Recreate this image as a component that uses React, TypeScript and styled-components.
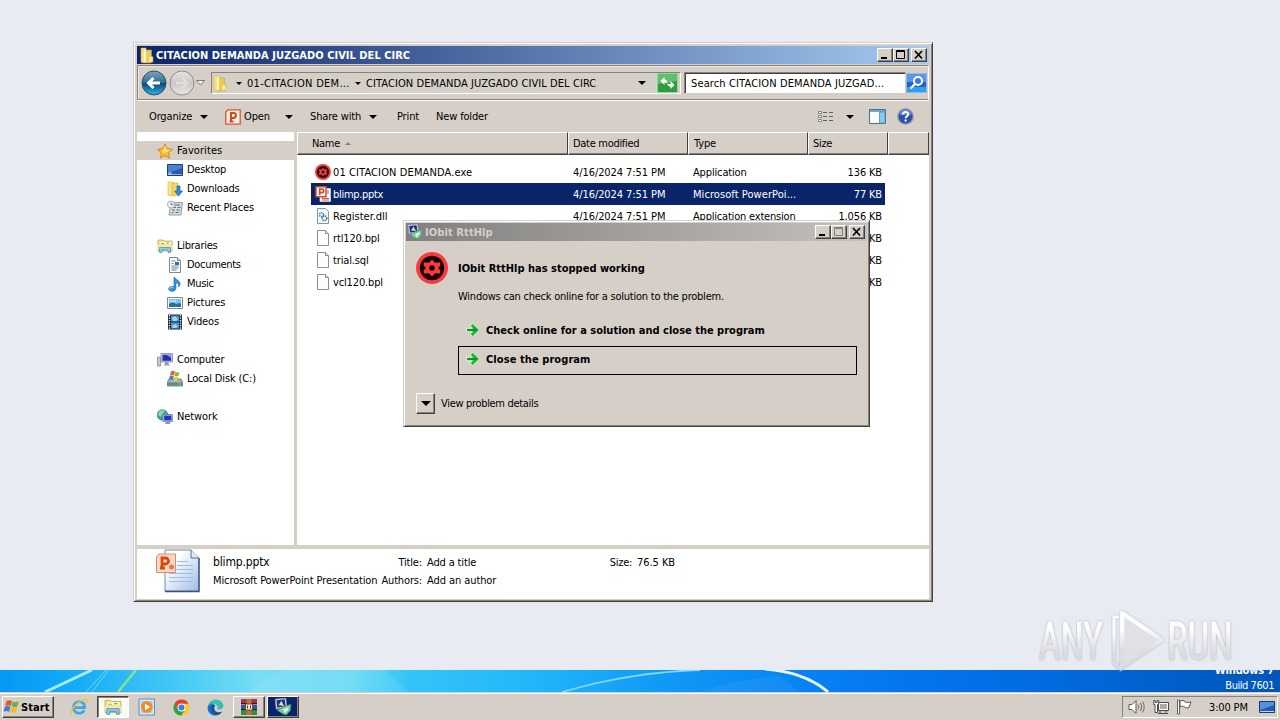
import React from "react";
import styled, {createGlobalStyle, css} from "styled-components";

const colors = {
    face: '#d5cfc8',
    light: '#ffffff',
    shadow: '#868179',
    dark: '#45423e',
    navy: '#0a246a',
    desktop: '#e8ebf2',
}

const GlobalStyle = createGlobalStyle`
  * {
    box-sizing: border-box;
  }

  body {
    margin: 0;
    overflow: hidden;
    background: ${colors.desktop};
    color: #000;
    font-family: "DejaVu Sans Condensed", "DejaVu Sans", sans-serif;
    font-stretch: condensed;
    font-size: 11px;
  }

  svg {
    display: block;
    flex: none;
  }
`

const raised = css`
  border: 1px solid;
  border-color: ${colors.light} ${colors.dark} ${colors.dark} ${colors.light};
  box-shadow: inset -1px -1px 0 ${colors.shadow};
`

const Screen = styled.div`
  position: relative;
  width: 1280px;
  height: 720px;
  overflow: hidden;
  display: flex;
  flex-direction: column;
  justify-content: flex-end;
`

const Text = styled.span<{$track?: number, $bold?: boolean, $size?: number}>`
  white-space: nowrap;
  letter-spacing: ${({$track = -0.15}) => $track}px;
  font-weight: ${({$bold}) => $bold ? 700 : 400};
  font-size: ${({$size = 11}) => $size}px;
`

const Frame = styled.section<{$x: number, $y: number, $w: number, $h: number, $pad?: number}>`
  position: absolute;
  left: ${({$x}) => $x}px;
  top: ${({$y}) => $y}px;
  width: ${({$w}) => $w}px;
  height: ${({$h}) => $h}px;
  display: flex;
  flex-direction: column;
  padding: ${({$pad = 2}) => $pad}px;
  background: ${colors.face};
  border: 1px solid;
  border-color: ${colors.face} ${colors.dark} ${colors.dark} ${colors.face};
  box-shadow: inset 1px 1px 0 ${colors.light}, inset -1px -1px 0 ${colors.shadow};
`

const TitleBar = styled.header<{$inactive?: boolean}>`
  display: flex;
  align-items: center;
  flex: none;
  height: 18px;
  padding: 0 2px 0 ${({$inactive}) => $inactive ? 1 : 2}px;
  gap: ${({$inactive}) => $inactive ? 2 : 1}px;
  color: ${({$inactive}) => $inactive ? '#d5cfc8' : '#fff'};
  background: ${({$inactive}) => $inactive
      ? 'linear-gradient(90deg, #808080, #c4c1be)'
      : 'linear-gradient(90deg, #0a246a, #a6caf0)'};
`

const Caption = styled.div`
  display: flex;
  margin-left: auto;
`

const CaptionButton = styled.span<{$gap?: boolean}>`
  ${raised};
  display: flex;
  width: 16px;
  height: 14px;
  margin-left: ${({$gap}) => $gap ? 2 : 0}px;
  background: ${colors.face};
`

/* ---------- explorer ---------- */

const NavBar = styled.div`
  display: flex;
  align-items: center;
  flex: none;
  height: 35px;
  margin-top: 1px;
  padding: 1px 0 0 3px;
  border: 1px solid ${colors.shadow};
  border-right-color: ${colors.light};
  box-shadow: 0 1px 0 ${colors.light}, inset 1px 1px 0 #ece8e3;
`

const NavButtons = styled.div`
  display: flex;
  width: 55px;
  gap: 2px;
`

const AddressBox = styled.div`
  display: flex;
  align-items: center;
  width: 470px;
  height: 22px;
  margin-left: 3px;
  border: 1px solid;
  border-color: ${colors.shadow} ${colors.light} ${colors.light} ${colors.shadow};
`

const Crumb = styled.span<{$w: number}>`
  display: flex;
  align-items: center;
  width: ${({$w}) => $w}px;
  gap: 5px;
`

const SearchBox = styled.div`
  display: flex;
  align-items: center;
  width: 222px;
  height: 22px;
  margin-left: 3px;
  padding-left: 6px;
  background: #fff;
  border: 1px solid;
  border-color: ${colors.shadow} ${colors.face} ${colors.face} ${colors.shadow};
  box-shadow: inset 1px 1px 0 ${colors.dark};
`

const Toolbar = styled.div`
  display: flex;
  align-items: center;
  flex: none;
  height: 31px;
  margin-top: 1px;
  padding-left: 12px;
`

const ToolItem = styled.div<{$w: number, $gap?: number}>`
  display: flex;
  align-items: center;
  flex: none;
  width: ${({$w}) => $w}px;
  gap: ${({$gap = 8}) => $gap}px;
`

const ToolRight = styled.div`
  display: flex;
  align-items: center;
  margin-left: auto;
  padding-right: 15px;
`

const Body = styled.div`
  display: flex;
  flex: none;
  height: 413px;
`

const Sidebar = styled.nav`
  width: 157px;
  padding-top: 9px;
  background: #fff;
`

const Group = styled.div`
  margin-bottom: 19px;
`

const TreeRow = styled.div<{$child?: boolean, $active?: boolean}>`
  display: flex;
  align-items: center;
  height: 19px;
  gap: 4px;
  padding-left: ${({$child}) => $child ? 30 : 20}px;
  background: ${({$active}) => $active ? colors.face : 'transparent'};
`

const FileList = styled.div`
  flex: 1;
  margin-left: 3px;
  background: #fff;
`

const HeaderRow = styled.div`
  display: grid;
  grid-template-columns: 271px 120px 120px 80px 1fr;
  height: 23px;
  margin-bottom: 6px;
  background: ${colors.face};
`

const HeaderCell = styled.div<{$pad: number}>`
  display: flex;
  align-items: center;
  gap: 5px;
  padding-left: ${({$pad}) => $pad}px;
  border: 1px solid;
  border-color: ${colors.light} ${colors.dark} ${colors.dark} ${colors.light};
  box-shadow: inset 0 -1px 0 ${colors.shadow};
`

const FileRow = styled.div<{$selected?: boolean}>`
  display: grid;
  grid-template-columns: 262px 120px 120px 72px;
  align-items: center;
  width: 574px;
  height: 22px;
  margin-left: 14px;
  color: ${({$selected}) => $selected ? '#fff' : '#000'};
  background: ${({$selected}) => $selected ? colors.navy : 'transparent'};
`

const FileName = styled.div`
  display: flex;
  align-items: center;
  gap: 2px;
  padding-left: 4px;
`

const FileSize = styled.div`
  text-align: right;
  padding-right: 3px;
`

const Details = styled.footer`
  display: grid;
  grid-template-columns: 53px 164px 40px 174px 26px 1fr;
  grid-template-rows: 18px 18px;
  column-gap: 5px;
  align-items: center;
  flex: none;
  height: 50px;
  margin-top: 4px;
  padding: 4px 0 0 18px;
  background: #fff;
`

const DocPreview = styled.div`
  grid-row: 1 / 3;
  align-self: start;
  margin-top: -4px;
`

const Right = styled.div`
  display: flex;
  justify-content: flex-end;
`

/* ---------- dialog ---------- */

const Report = styled.div`
  display: grid;
  grid-template-columns: 32px 1fr;
  column-gap: 10px;
  padding: 11px 10px 0;
`

const ReportBody = styled.div`
  display: flex;
  flex-direction: column;
`

const Line = styled.div<{$h: number}>`
  display: flex;
  align-items: center;
  height: ${({$h}) => $h}px;
`

const CommandLink = styled.div<{$focused?: boolean}>`
  display: flex;
  align-items: center;
  height: 29px;
  gap: 5px;
  padding: 0 0 3px 6px;
  border: 1px solid ${({$focused}) => $focused ? '#000' : 'transparent'};
`

const MoreRow = styled.div`
  display: flex;
  align-items: center;
  gap: 6px;
  margin: 18px 0 0 10px;
`

const DropButton = styled.span`
  ${raised};
  display: flex;
  align-items: center;
  justify-content: center;
  width: 19px;
  height: 21px;
`

/* ---------- desktop ---------- */

const Wallpaper = styled.div`
  position: relative;
  flex: none;
  height: 22px;
  overflow: hidden;
  background: linear-gradient(90deg, #0598f5 0, #16adf8 80px, #4bcdf4 190px, #78def4 260px, #6bdaf5 350px, #34c4f9 410px,
    #22b4f8 540px, #109af6 660px, #0683f4 800px, #0473ec 930px, #026ade 1060px, #0055b8 1280px);
`

const Build = styled.div`
  position: absolute;
  right: 6px;
  bottom: -1px;
  color: #fff;
  text-align: right;
  line-height: 15px;
`

const Watermark = styled.div`
  position: absolute;
  left: 1036px;
  top: 606px;
`

const Taskbar = styled.footer`
  display: flex;
  align-items: center;
  flex: none;
  height: 28px;
  padding: 2px 2px 0;
  gap: 2px;
  background: ${colors.face};
  box-shadow: inset 0 1px 0 ${colors.face}, inset 0 2px 0 #fff;
`

const StartButton = styled.div`
  ${raised};
  display: flex;
  align-items: center;
  width: 52px;
  height: 22px;
  margin-right: 7px;
`

const TaskButton = styled.div<{$kind?: 'pressed' | 'raised' | 'flash'}>`
  display: flex;
  align-items: center;
  justify-content: center;
  width: 32px;
  height: 22px;
  border: 1px solid transparent;
  ${({$kind}) => ($kind === 'raised' || $kind === 'flash') && raised};
  ${({$kind}) => $kind === 'flash' && css`background: ${colors.navy};`}
  ${({$kind}) => $kind === 'pressed' && css`
    background: #fbfaf3;
    border-color: ${colors.dark} #fff #fff ${colors.dark};
    box-shadow: inset 1px 1px 0 ${colors.shadow};
  `}
`

const Tray = styled.div`
  display: flex;
  align-items: center;
  width: 156px;
  height: 22px;
  margin-left: auto;
  padding-left: 5px;
  border: 1px solid;
  border-color: ${colors.shadow} #fff #fff ${colors.shadow};
`

const Clock = styled.span`
  display: flex;
  width: 50px;
  margin-left: 16px;
`

/* ---------- icons ---------- */

const Arrow = ({w = 8, color = '#000'}: {w?: number, color?: string}) => (
    <svg width={w} height={w / 2} viewBox="0 0 8 4"><path d="M0 0h8L4 4z" fill={color} /></svg>
)

const FolderIcon = () => (
    <svg width="16" height="17" viewBox="0 0 16 17">
        <path d="M2 1h5v14l-3 1-2-1z" fill="#f5df80" stroke="#d9b64a" strokeWidth=".5" />
        <path d="M7 3h5.500v6l1.500 1v5l-3 1H5V4z" fill="#ecca55" stroke="#c99f38" strokeWidth=".5" />
        <path d="M4.500 3.500l2.500-2v13l-2.500 1z" fill="#fff6bf" />
        <path d="M10 10h3.500v5H10z" fill="#f7e79a" />
    </svg>
)

const StarIcon = () => (
    <svg width="16" height="16" viewBox="0 0 16 16">
        <path d="M8 .8l2.300 4.800 5.200.7-3.800 3.600.9 5.300L8 12.700l-4.600 2.500.9-5.300L.5 6.300l5.200-.7z" fill="#fbb92c" stroke="#d98218" strokeWidth=".9" />
        <path d="M8 2.500l1.500 4 4 .6-4 2.200L5 10l1-3z" fill="#ffe27c" />
    </svg>
)

const DesktopIcon = () => (
    <svg width="16" height="16" viewBox="0 0 16 16">
        <path d="M.5 2.500h15v11H.5z" fill="#2a5cab" stroke="#1b3f78" />
        <path d="M1 3h14v3L1 11z" fill="#4a83cc" />
        <path d="M1 12h14v1H1z" fill="#8fb2d8" />
        <path d="M1.500 10.500h3v2h-3z" fill="#9ed0f2" />
    </svg>
)

const DownloadsIcon = () => (
    <svg width="16" height="16" viewBox="0 0 16 16">
        <path d="M1 1h5v13l-3 1-2-1z" fill="#f7e48a" stroke="#d9b64a" strokeWidth=".6" />
        <path d="M6 2h5v12l-4 1-2-1V3z" fill="#f1d76b" stroke="#cfa53a" strokeWidth=".6" />
        <path d="M10 5h3v5h2.500L11.500 15 7.600 10H10z" fill="#2a8fe0" stroke="#1460ac" strokeWidth=".7" />
    </svg>
)

const RecentIcon = () => (
    <svg width="16" height="16" viewBox="0 0 16 16">
        <path d="M5 2.500h10.500L14 15H2l1-6z" fill="#d4dce0" stroke="#7f8c92" strokeWidth=".8" />
        <path d="M7 5h6M7 7.500h2M10.500 7.500h3M5 10h3M9.500 10h3M4.500 12.500h2M8.500 12.500h3" stroke="#617078" strokeWidth="1.200" />
        <circle cx="4" cy="4.500" r="3.500" fill="#eef2f4" stroke="#8f9da4" strokeWidth=".8" />
        <path d="M4 2.500v2h2" stroke="#536068" strokeWidth=".8" fill="none" />
    </svg>
)

const LibraryIcon = ({size = 16}: {size?: number}) => (
    <svg width={size} height={size} viewBox="0 0 16 16">
        <path d="M1 2h5l1 1h8v10H1z" fill="#f4e08a" stroke="#cda845" strokeWidth=".8" />
        <path d="M3 4h11v2H3z" fill="#fffbe0" />
        <path d="M4 5h3v1H4zM9 4.500h3v1H9z" fill="#77b255" />
        <path d="M1 7h14v5H1z" fill="#f8eaa6" />
        <path d="M2.500 14.500V9.500h11v5h-2.500v-2.500H5v2.500z" fill="#8cc9ee" stroke="#4b94c6" strokeWidth=".8" />
    </svg>
)

const DocumentsIcon = () => (
    <svg width="16" height="16" viewBox="0 0 16 16">
        <path d="M2.500.5h8l3 3v12h-11z" fill="#fbfdff" stroke="#7a8a98" />
        <path d="M4.500 4h4M4.500 6.500h2M4.500 9h7M4.500 11h7M4.500 13h5" stroke="#5f87ad" />
        <path d="M8 5h4v3H8z" fill="#3d6f9f" />
        <path d="M10.500.5v3h3" fill="#dbe6ef" stroke="#7a8a98" />
    </svg>
)

const MusicIcon = () => (
    <svg width="16" height="16" viewBox="0 0 16 16">
        <path d="M7 1c1 2 5 3 6 6 .3 2-.5 3-1.500 4 .5-2-.5-4-2.500-4.500V12c0 2-1.500 3.300-3.800 3.300S1.500 14 1.700 12.700c.3-1.700 2.800-2.700 5.300-2z" fill="#2f92dc" stroke="#1667ad" strokeWidth=".6" />
        <path d="M3 12.500c.5-1 2-1.300 3-1" stroke="#a5dcff" fill="none" />
    </svg>
)

const PicturesIcon = () => (
    <svg width="16" height="16" viewBox="0 0 16 16">
        <path d="M.5 2.500h15v11H.5z" fill="#fff" stroke="#7d8b96" />
        <path d="M2 4h12v8H2z" fill="#7cc3ea" />
        <path d="M2 9c3-2 5-2 7 0 2-1 3-1 5-.500V12H2z" fill="#2b6e96" />
        <path d="M3 5.500h6v1H3z" fill="#e3f4fc" />
    </svg>
)

const VideosIcon = () => (
    <svg width="16" height="16" viewBox="0 0 16 16">
        <path d="M1 .5h14v15H1z" fill="#1c2a38" />
        <path d="M4 1.500h8v6H4zM4 8.500h8v6H4z" fill="#4397d0" />
        <path d="M5 4l3-2 3 3-2 2H6zM5 12l3-2 3 2-2 2H6z" fill="#a9d3ee" />
        <path d="M2.500 1v14M13.500 1v14" stroke="#fff" strokeWidth="1.300" strokeDasharray="1.200 1.300" />
    </svg>
)

const ComputerIcon = () => (
    <svg width="16" height="16" viewBox="0 0 16 16">
        <path d="M.5 5h3v9h-3z" fill="#c7c9cf" stroke="#7d8089" strokeWidth=".7" />
        <path d="M4 1.500h11.500v8.500H4z" fill="#c9ccd8" stroke="#84879a" strokeWidth=".8" />
        <path d="M5.500 2.800h8.600v6H5.500z" fill="#1d2fc0" />
        <path d="M9 2.800h5v3z" fill="#7f96f4" />
        <path d="M8 10h3.500v2l2 1.500h-7L8 12z" fill="#9699a8" />
    </svg>
)

const DiskIcon = () => (
    <svg width="16" height="16" viewBox="0 0 16 16">
        <path d="M2 8h12l1.500 3v4H.5v-4z" fill="#a7b4b4" stroke="#66706f" strokeWidth=".8" />
        <path d="M1 11.500h14v3H1z" fill="#5c8a8f" />
        <path d="M11 12.500h3v1h-3z" fill="#59e05f" />
        <path d="M4 .5c1.500-1 3-.8 4 0L7 4.500c-1-.7-2.500-.8-4 0z" fill="#e8632b" />
        <path d="M8.500 .8c1.500.8 3 .8 4 0l-1 4c-1.200.8-2.800.6-4 0z" fill="#7cbb3b" />
        <path d="M2.800 5.100c1.400-.8 2.900-.7 4 0l-1 4c-1-.8-2.500-.8-4 0z" fill="#3a86dd" />
        <path d="M7.300 5.500c1.500.8 3 .8 4 0l-1 4c-1.200.8-2.800.6-4 0z" fill="#f7c52e" />
    </svg>
)

const NetworkIcon = () => (
    <svg width="16" height="16" viewBox="0 0 16 16">
        <circle cx="5.500" cy="6" r="5.300" fill="#3aa0b8" stroke="#2a6f8f" strokeWidth=".6" />
        <path d="M2 3c2-2 5-2 6-1L5 5 4 8 1 6zM6 8h3v3H6z" fill="#8fdc8b" />
        <path d="M6 5.500h9.500v7H6z" fill="#c5cbe0" stroke="#666f90" strokeWidth=".7" />
        <path d="M7.200 6.600h7.200v4.800H7.200z" fill="#1b34c8" />
        <path d="M9 12.500h3.500l1 2.500H8z" fill="#8f96ad" />
    </svg>
)

const ExeIcon = ({size}: {size: number}) => (
    <svg width={size} height={size} viewBox="0 0 32 32">
        <circle cx="16" cy="16" r="16" fill="#fb3a40" />
        <circle cx="16" cy="16" r="12.200" fill="#170405" />
        <path d="M16 7.500l3 3.300 5-.4.300 3L22 16l2.300 2.600-.3 3-5-.4-3 3.300-3-3.300-5 .4-.3-3L10 16l-2.300-2.600.3-3 5 .4z" fill="#fb3a40" />
        <circle cx="16" cy="16" r="2.800" fill="#170405" />
    </svg>
)

const PptIcon = () => (
    <svg width="16" height="16" viewBox="0 0 16 16">
        <path d="M5 2.500h10.500v13H5z" fill="#fff" stroke="#c8d0de" strokeWidth=".8" />
        <path d="M11 5h3M11 7h3M7 12.500h7M7 14h7" stroke="#d05a33" />
        <path d="M1 .8h10v10H1z" fill="#fff" stroke="#d24a21" strokeWidth="1.400" />
        <path d="M4.700 9V3h2.200a1.700 1.700 0 010 3.600H4.700" fill="none" stroke="#d24a21" strokeWidth="1.700" />
    </svg>
)

const OpenIcon = () => (
    <svg width="16" height="16" viewBox="0 0 16 16">
        <path d="M3 .8h12.200v14.400H.8V3z" fill="#fdf0e9" stroke="#d35530" strokeWidth="1.300" />
        <path d="M6 12.500V4h2.500a2.400 2.400 0 010 4.900H6M4.500 12.500h4" fill="none" stroke="#d34a1e" strokeWidth="2" />
    </svg>
)

const DllIcon = () => (
    <svg width="16" height="16" viewBox="0 0 16 16">
        <path d="M2.500.5h8l3 3v12h-11z" fill="#f5f9fc" stroke="#8795a3" />
        <circle cx="6.500" cy="6.800" r="2" fill="none" stroke="#4a7ca8" strokeWidth="1.500" strokeDasharray="1.300 .7" />
        <circle cx="9.500" cy="10.300" r="2.300" fill="none" stroke="#3a6a98" strokeWidth="1.500" strokeDasharray="1.300 .7" />
    </svg>
)

const FileIcon = () => (
    <svg width="16" height="16" viewBox="0 0 16 16">
        <path d="M2.500.5h8l3 3v12h-11z" fill="#fcfcfc" stroke="#8d8d8d" />
        <path d="M10.500.5v3h3" fill="#e8e8e8" stroke="#8d8d8d" />
    </svg>
)

const NavButton = ({active}: {active?: boolean}) => (
    <svg width="26" height="26" viewBox="0 0 26 26">
        <defs>
            <linearGradient id="back" x1="0" y1="0" x2="0" y2="1">
                <stop offset="0" stopColor="#7fa5bd" />
                <stop offset=".48" stopColor="#2f6c94" />
                <stop offset=".52" stopColor="#0d4a78" />
                <stop offset="1" stopColor="#27b4e6" />
            </linearGradient>
            <linearGradient id="fwd" x1="0" y1="0" x2="0" y2="1">
                <stop offset="0" stopColor="#e6e5e3" />
                <stop offset=".5" stopColor="#c9c8c6" />
                <stop offset="1" stopColor="#e9e9e8" />
            </linearGradient>
        </defs>
        <circle cx="13" cy="13" r="12" fill={active ? 'url(#back)' : 'url(#fwd)'} stroke={active ? '#2c4e66' : '#8e8d8b'} />
        {active
            ? <path d="M19 13H8M12.500 8L7.500 13l5 5" fill="none" stroke="#fff" strokeWidth="3" />
            : <path d="M7 13h11M13.500 8l5 5-5 5" fill="none" stroke="#dfdedd" strokeWidth="2.600" />}
    </svg>
)

const RefreshIcon = () => (
    <svg width="21" height="20" viewBox="0 0 21 20">
        <path d="M.5.5h20v19H.5z" fill="#2f9a40" stroke="#8ed697" />
        <path d="M1 1h19v7L1 11z" fill="#62bd6d" />
        <path d="M7.500 4L3.500 8l4 4V9.500c1.500 0 2.500.2 3 1.500 0-3-1-4.500-3-4.500zM13.500 8l4 4-4 4v-2.500c-2.500 0-3-1-3.300-3 1 .5 2 .5 3.300.5z" fill="#fff" />
    </svg>
)

const SearchIcon = () => (
    <svg width="21" height="20" viewBox="0 0 21 20">
        <path d="M.5.5h20v19H.5z" fill="#1f62cc" stroke="#8db8ee" />
        <path d="M1 1h19v8H1z" fill="#5b97e6" />
        <path d="M1 14h19v5H1z" fill="#31a0ee" />
        <circle cx="12" cy="8" r="4" fill="#3c79d6" stroke="#fff" strokeWidth="2" />
        <path d="M9 11l-4.500 4.500" stroke="#fff" strokeWidth="2.400" />
    </svg>
)

const ViewIcon = () => (
    <svg width="16" height="12" viewBox="0 0 16 12">
        <path d="M.5.5h3v2h-3zM.5 4.500h3v2h-3zM.5 8.500h3v2h-3z" fill="#fff" stroke="#77797c" strokeWidth=".9" />
        <path d="M5 1.500h4M11 1.500h4M5 5.500h4M11 5.500h4M5 9.500h4M11 9.500h4" stroke="#5f6163" />
    </svg>
)

const PaneIcon = () => (
    <svg width="17" height="15" viewBox="0 0 17 15">
        <path d="M.5.5h16v14H.5z" fill="#fff" stroke="#4d6f92" />
        <path d="M1 1h15v2H1z" fill="#7fa4c4" />
        <path d="M10.500 3h5.500v11h-5.500z" fill="#85cdee" stroke="#4d8fb8" strokeWidth=".8" />
    </svg>
)

const HelpIcon = () => (
    <svg width="17" height="17" viewBox="0 0 17 17">
        <circle cx="8.500" cy="8.500" r="7.600" fill="#2c50b0" stroke="#8a93ab" strokeWidth="1.400" />
        <path d="M2.500 7a6 6 0 0112 0z" fill="#6586d4" />
        <path d="M6 6.500c0-3.300 5.200-3.300 5.200-.3 0 2-2.600 2-2.600 4" fill="none" stroke="#fff" strokeWidth="1.900" />
        <path d="M7.600 11.500h2v2h-2z" fill="#fff" />
    </svg>
)

const PreviewIcon = () => (
    <svg width="46" height="44" viewBox="0 0 46 44">
        <defs>
            <linearGradient id="sheet" x1="0" y1="0" x2="1" y2="1">
                <stop offset=".3" stopColor="#fbfdff" />
                <stop offset="1" stopColor="#9dbbe6" />
            </linearGradient>
        </defs>
        <path d="M10 1h26l8 8v33H10z" fill="url(#sheet)" stroke="#7089ad" />
        <path d="M44 9v33.500H10" fill="none" stroke="#3d5578" strokeWidth="1.400" />
        <path d="M36 1v8h8" fill="#e3ecf8" stroke="#56708f" />
        <path d="M22 12.500h11M22 16.500h16M14 20.500h24M14 24.500h24M14 28.500h24M14 32.500h24" stroke="#a3bce0" />
        <path d="M4 5h16.500v18.500H1.500V8z" fill="#f9d9c8" stroke="#e08a68" />
        <path d="M7 19V9h3.500a3 3 0 010 6H7M5 19h5" fill="none" stroke="#d9480f" strokeWidth="2.800" />
        <circle cx="16.500" cy="18" r="2.500" fill="#e07a52" />
    </svg>
)

const ReportIcon = ({size = 16}: {size?: number}) => (
    <svg width={size} height={size} viewBox="0 0 16 16">
        <path d="M1 1l9.500-1 1 8-9.500 2z" fill="#d9dce2" stroke="#8d929c" strokeWidth=".6" />
        <path d="M2.200 2l7.300-.8.8 6-7.300 1.500z" fill="#16309a" />
        <path d="M4 6.500l2.500-4L9 7z" fill="#f0e06a" />
        <path d="M7 8.500l8-3-.5 5.500-3.500 4-2.500-.5L3 11z" fill="#7ecb9a" stroke="#3a8f68" strokeWidth=".6" />
        <path d="M8 10l5-2-1 3-2.500 2.500z" fill="#d9f4e0" />
    </svg>
)

const GreenArrow = () => (
    <svg width="16" height="16" viewBox="0 0 16 16">
        <path d="M1.500 6.300h6L5.200 3.700 7.800 1.500 14.500 8l-6.700 6.500-2.600-2.200L7.500 9.700h-6z" fill="#17b637" stroke="#def2da" strokeWidth="1" />
        <path d="M2.500 8h9" stroke="#0a8423" strokeWidth="1.300" />
    </svg>
)

const WindowsIcon = () => (
    <svg width="18" height="16" viewBox="0 0 18 16">
        <path d="M3.500 2c2-1.200 4-1 5.500 0L7.700 7c-1.500-1-3.300-1-5.500 0z" fill="#e35a27" />
        <path d="M9.800 2.300c2 1.200 4 1 6 0l-1.400 5c-2 1.200-4 1-5.900 0z" fill="#6db33b" />
        <path d="M2 7.800c2-1.200 3.900-1 5.500 0l-1.400 5c-1.500-1-3.500-1-5.500 0z" fill="#3580d8" />
        <path d="M8.300 8.100c2 1.200 4 1 5.900 0l-1.400 5c-2 1.200-4 1-5.900 0z" fill="#f5bd25" />
    </svg>
)

const IeIcon = () => (
    <svg width="18" height="18" viewBox="0 0 18 18">
        <path d="M14.200 12.300A5.800 5.800 0 119.300 3.600c3.500 0 5.500 2.700 5.400 6.100H4" fill="none" stroke="#3fa9e4" strokeWidth="2.800" />
        <path d="M1.500 16.500C-.5 13.500 5 6 10.500 3c3-1.800 6-2.300 6.500-.8.300 1-.4 2.300-1.400 3.500" fill="none" stroke="#eec239" strokeWidth="1.400" />
    </svg>
)

const PlayerIcon = () => (
    <svg width="18" height="18" viewBox="0 0 18 18">
        <path d="M1 1h15.500v16H1z" fill="#d6e7f5" stroke="#5f8fbc" />
        <path d="M3 3h11.500v12H3z" fill="#a8cbe8" />
        <circle cx="8.800" cy="9" r="5.800" fill="#f58a1e" />
        <path d="M7 5.700v6.600L12.300 9z" fill="#fff" />
    </svg>
)

const ChromeIcon = () => (
    <svg width="17" height="17" viewBox="0 0 18 18">
        <circle cx="9" cy="9" r="8.500" fill="#f9c72d" />
        <path d="M1.600 4.800A8.500 8.500 0 0116.400 4.900H9L5.400 11z" fill="#e33e30" />
        <path d="M1.600 4.700A8.500 8.500 0 008.800 17.500L12.500 11 9 13 5.500 11z" fill="#2ba24c" />
        <circle cx="9" cy="9" r="4.200" fill="#fff" />
        <circle cx="9" cy="9" r="3.200" fill="#3c7fe8" />
    </svg>
)

const EdgeIcon = () => (
    <svg width="17" height="17" viewBox="0 0 18 18">
        <path d="M1 7.500C2 3 5.500.6 9.300.6c4.700 0 8 3.400 8 6.600 0 2.500-2 4-4.300 4-1.700 0-2.500-.6-2-1.400 1-1.600-.4-4.300-3.500-4.300C4.800 5.500 2 6.500 1 7.500z" fill="#35c1b1" />
        <path d="M.6 9.500c0-2.600 3-4.800 6.500-4.300-2 1-2.700 2.800-2.400 4.800.4 3 3.500 5.200 6.500 4.800 2-.2 3.500-1 4.500-1.700C14.500 16 12 17.500 9 17.500 4 17.500.6 14 .6 9.500z" fill="#1a6fcb" />
        <path d="M6.500 5.500c-2.500 1.500-3.300 5-1.500 8 1.200 2 3 3.200 5.300 3.500 2.500-.2 4.500-2 5.600-3.600-3 1.400-6.400.6-7.600-1.600-1-1.800-.7-4 .5-5z" fill="#14529c" />
    </svg>
)

const RarIcon = () => (
    <svg width="18" height="18" viewBox="0 0 18 18">
        <path d="M1 1h16v5H1z" fill="#a8324a" />
        <path d="M1 6.500h16v5H1z" fill="#3157a8" />
        <path d="M1 12h16v5H1z" fill="#3f8a3a" />
        <path d="M1 5.500h16M1 11.500h16" stroke="#2a1a1a" />
        <path d="M6.500 1h5v16h-5z" fill="#b5763a" />
        <path d="M5.500 6h7v6h-7z" fill="#f1e7cf" stroke="#5a3a20" strokeWidth=".8" />
        <path d="M7.500 7.500v3M10.500 7.500v3" stroke="#5a3a20" />
    </svg>
)

const SpeakerIcon = () => (
    <svg width="17" height="16" viewBox="0 0 17 16">
        <path d="M1 5.500h3L8 1.500v13l-4-4H1z" fill="#fff" stroke="#5c5a57" />
        <path d="M10 5.500c1 1.500 1 3.500 0 5M12.300 4c1.800 2.500 1.800 5.500 0 8M14.500 2.500c2.200 3.500 2.200 7.500 0 11" fill="none" stroke="#6c6a67" />
    </svg>
)

const NetTrayIcon = () => (
    <svg width="17" height="16" viewBox="0 0 17 16">
        <path d="M5.500 3.500h10v8h-10z" fill="#aeaba7" stroke="#4c4a48" />
        <path d="M6.500 4.500h8v6h-8z" fill="none" stroke="#fff" />
        <path d="M7 12v2.500M13 12v2.500M5 14.500h10" stroke="#4c4a48" />
        <path d="M.8 1.500h1.400v2h2v-2h1.500v4H4.500v8H2v-8H.8z" fill="#fff" stroke="#4c4a48" />
    </svg>
)

const FlagIcon = () => (
    <svg width="17" height="16" viewBox="0 0 17 16">
        <path d="M1.500 1h2v14h-2z" fill="#fff" stroke="#55524f" strokeWidth=".9" />
        <path d="M4 2c2.500-1 4-.5 5 .8 1.500 1 4 .7 6 .2l-2 5.500c-2 .7-3.500.3-4.500-.7C7.500 7 6 7 4 8z" fill="#fff" stroke="#55524f" />
    </svg>
)

const ShowDesktopIcon = () => (
    <svg width="16" height="13" viewBox="0 0 16 13">
        <path d="M.5.5h15v11H.5z" fill="#2458b4" stroke="#183c78" />
        <path d="M1 1h14v3L1 9z" fill="#5590de" />
        <path d="M1 10.500h14" stroke="#bcd6f0" />
    </svg>
)

const CaptionButtons = ({dim}: {dim?: boolean}) => (
    <Caption>
        <CaptionButton><svg width="14" height="12"><path d="M3 8h6v2H3z" /></svg></CaptionButton>
        <CaptionButton>
            <svg width="14" height="12" fill="none" stroke={dim ? '#868179' : '#000'}>
                <path d="M2.500 1.500h8v8h-8zM2.500 2.500h8" />
            </svg>
        </CaptionButton>
        <CaptionButton $gap>
            <svg width="14" height="12"><path d="M3 2l7 7.500M10 2L3 9.500" stroke="#000" strokeWidth="1.700" /></svg>
        </CaptionButton>
    </Caption>
)

const tree = [
    {label: "Favorites", icon: <StarIcon />, track: 0.08, active: true, children: [
        {label: "Desktop", icon: <DesktopIcon />, track: -0.25},
        {label: "Downloads", icon: <DownloadsIcon />, track: -0.2},
        {label: "Recent Places", icon: <RecentIcon />, track: -0.13},
    ]},
    {label: "Libraries", icon: <LibraryIcon />, track: -0.25, children: [
        {label: "Documents", icon: <DocumentsIcon />, track: -0.3},
        {label: "Music", icon: <MusicIcon />, track: -0.3},
        {label: "Pictures", icon: <PicturesIcon />, track: -0.1},
        {label: "Videos", icon: <VideosIcon />, track: -0.15},
    ]},
    {label: "Computer", icon: <ComputerIcon />, track: -0.25, children: [
        {label: "Local Disk (C:)", icon: <DiskIcon />, track: -0.15},
    ]},
    {label: "Network", icon: <NetworkIcon />, track: -0.1, children: []},
]

const date = "4/16/2024 7:51 PM"

const files = [
    {name: "01 CITACION DEMANDA.exe", icon: <ExeIcon size={16} />, track: 0.11, date, type: "Application", size: "136 KB"},
    {name: "blimp.pptx", icon: <PptIcon />, track: -0.3, date, type: "Microsoft PowerPoi...", typeTrack: 0.07, size: "77 KB", selected: true},
    {name: "Register.dll", icon: <DllIcon />, track: 0, date, type: "Application extension", typeTrack: -0.2, size: "1,056 KB"},
    {name: "rtl120.bpl", icon: <FileIcon />, size: "KB"},
    {name: "trial.sql", icon: <FileIcon />, size: "KB"},
    {name: "vcl120.bpl", icon: <FileIcon />, size: "KB"},
]

const Explorer = () => (
    <Frame $x={133} $y={42} $w={800} $h={560} $pad={3}>
        <TitleBar>
            <FolderIcon />
            <Text $bold $track={0.03}>CITACION DEMANDA JUZGADO CIVIL DEL CIRC</Text>
            <CaptionButtons />
        </TitleBar>
        <NavBar>
            <NavButtons><NavButton active /><NavButton /></NavButtons>
            <ToolItem $w={12}>
                <svg width="9" height="6" viewBox="0 0 9 6"><path d="M.5.5h8l-4 4.500z" fill="#f4f2ef" stroke="#7d7a76" /></svg>
            </ToolItem>
            <AddressBox>
                <FolderIcon />
                <Crumb $w={119}><ToolItem $w={3} /><Arrow w={6} /><Text $track={0.27}>01-CITACION DEM...</Text></Crumb>
                <Crumb $w={291}><ToolItem $w={3} /><Arrow w={6} /><Text $track={0.08}>CITACION DEMANDA JUZGADO CIVIL DEL CIRC</Text></Crumb>
                <ToolItem $w={19}><Arrow /></ToolItem>
                <RefreshIcon />
            </AddressBox>
            <SearchBox><Text $track={0.13}>Search CITACION DEMANDA JUZGAD...</Text></SearchBox>
            <SearchIcon />
        </NavBar>
        <Toolbar>
            <ToolItem $w={76}><Text>Organize</Text><Arrow /></ToolItem>
            <ToolItem $w={60} $gap={3}><OpenIcon /><Text>Open</Text></ToolItem>
            <ToolItem $w={25}><Arrow /></ToolItem>
            <ToolItem $w={87}><Text>Share with</Text><Arrow /></ToolItem>
            <ToolItem $w={39}><Text>Print</Text></ToolItem>
            <Text>New folder</Text>
            <ToolRight>
                <ToolItem $w={28}><ViewIcon /></ToolItem>
                <ToolItem $w={23}><Arrow /></ToolItem>
                <ToolItem $w={28}><PaneIcon /></ToolItem>
                <HelpIcon />
            </ToolRight>
        </Toolbar>
        <Body>
            <Sidebar>
                {tree.map(({label, icon, track, active, children}) => <Group key={label}>
                    <TreeRow $active={active}>{icon}<Text $track={track}>{label}</Text></TreeRow>
                    {children.map((item) => <TreeRow key={item.label} $child>
                        {item.icon}<Text $track={item.track}>{item.label}</Text>
                    </TreeRow>)}
                </Group>)}
            </Sidebar>
            <FileList>
                <HeaderRow>
                    <HeaderCell $pad={14}>
                        <Text $track={-0.3}>Name</Text>
                        <svg width="6" height="3" viewBox="0 0 6 3"><path d="M3 0l3 3H0z" fill="#868179" /></svg>
                    </HeaderCell>
                    <HeaderCell $pad={4}><Text $track={-0.3}>Date modified</Text></HeaderCell>
                    <HeaderCell $pad={5}><Text>Type</Text></HeaderCell>
                    <HeaderCell $pad={4}><Text $track={-0.3}>Size</Text></HeaderCell>
                    <HeaderCell $pad={0} />
                </HeaderRow>
                {files.map((file) => <FileRow key={file.name} $selected={file.selected}>
                    <FileName>{file.icon}<Text $track={file.track}>{file.name}</Text></FileName>
                    <Text $track={-0.08}>{file.date}</Text>
                    <Text $track={file.typeTrack}>{file.type}</Text>
                    <FileSize><Text>{file.size}</Text></FileSize>
                </FileRow>)}
            </FileList>
        </Body>
        <Details>
            <DocPreview><PreviewIcon /></DocPreview>
            <Text $size={12}>blimp.pptx</Text>
            <Right><Text>Title:</Text></Right>
            <Text>Add a title</Text>
            <Right><Text $track={-0.3}>Size:</Text></Right>
            <Text $track={-0.05}>76.5 KB</Text>
            <Text $track={-0.1}>Microsoft PowerPoint Presentation</Text>
            <Right><Text>Authors:</Text></Right>
            <Text $track={-0.08}>Add an author</Text>
        </Details>
    </Frame>
)

const CrashDialog = () => (
    <Frame $x={403} $y={220} $w={467} $h={207}>
        <TitleBar $inactive>
            <ReportIcon />
            <Text $bold $track={0.1}>IObit RttHlp</Text>
            <CaptionButtons dim />
        </TitleBar>
        <Report>
            <ExeIcon size={32} />
            <ReportBody>
                <Line $h={32}><Text $bold $track={0}>IObit RttHlp has stopped working</Text></Line>
                <Line $h={24}><Text $track={-0.23}>Windows can check online for a solution to the problem.</Text></Line>
                <Line $h={9} />
                <CommandLink>
                    <GreenArrow />
                    <Text $bold $track={0}>Check online for a solution and close the program</Text>
                </CommandLink>
                <CommandLink $focused>
                    <GreenArrow />
                    <Text $bold $track={0.08}>Close the program</Text>
                </CommandLink>
            </ReportBody>
        </Report>
        <MoreRow>
            <DropButton><Arrow w={10} /></DropButton>
            <Text $track={-0.32}>View problem details</Text>
        </MoreRow>
    </Frame>
)

const App = () => (
    <Screen>
        <GlobalStyle />
        <Explorer />
        <CrashDialog />
        <Wallpaper>
            <svg width="1280" height="22" viewBox="0 0 1280 22" fill="none">
                <path d="M45 22L92 0" stroke="#a5ebf9" strokeWidth="3" />
                <path d="M86 22L106 0M92 22L109 0" stroke="#8be0f8" strokeWidth=".8" />
                <path d="M118 22L136 0" stroke="#8be08a" strokeWidth="2.500" />
                <path d="M250 22Q262 8 285 0H385L408 22z" fill="#fff" opacity=".08" />
                <path d="M562 22Q630 2 700 0" stroke="#7fd8fb" strokeWidth="1.800" />
                <path d="M700 22Q740 8 780 6L800 22z" fill="#fff" opacity=".06" />
                <path d="M765 -1Q805 2 828 22" stroke="#e8f7ff" strokeWidth="3" />
            </svg>
            <Build>
                <div><Text $bold>Windows 7</Text></div>
                <div><Text $track={-0.45}>Build 7601</Text></div>
            </Build>
        </Wallpaper>
        <Watermark>
            <svg width="200" height="68" viewBox="0 0 200 68">
                <defs>
                    <linearGradient id="letters" x1="0" y1="0" x2="0" y2="1">
                        <stop offset=".3" stopColor="#fbfcfd" />
                        <stop offset=".7" stopColor="#dadce1" />
                    </linearGradient>
                    <filter id="soft" x="-10%" y="-10%" width="120%" height="120%">
                        <feDropShadow dx="0" dy="0" stdDeviation="1.200" floodColor="#8e9299" floodOpacity=".7" />
                    </filter>
                </defs>
                <g filter="url(#soft)">
                    <g fill="url(#letters)" stroke="url(#letters)" strokeWidth=".9" fontFamily="Roboto, sans-serif" fontSize="51">
                        <text x="3" y="53" textLength="64" lengthAdjust="spacingAndGlyphs">ANY</text>
                        <text x="131" y="53" textLength="66" lengthAdjust="spacingAndGlyphs">RUN</text>
                    </g>
                    <path d="M86 7v54l40-27z" fill="#dfe1e6" stroke="url(#letters)" strokeWidth="4.500" strokeLinejoin="round" />
                    <path d="M83 11h-5v46l8 7" fill="none" stroke="url(#letters)" strokeWidth="3" />
                </g>
            </svg>
        </Watermark>
        <Taskbar>
            <StartButton><WindowsIcon /><Text $bold $track={0.1}>Start</Text></StartButton>
            <TaskButton><IeIcon /></TaskButton>
            <TaskButton $kind="pressed"><LibraryIcon size={18} /></TaskButton>
            <TaskButton><PlayerIcon /></TaskButton>
            <TaskButton><ChromeIcon /></TaskButton>
            <TaskButton><EdgeIcon /></TaskButton>
            <TaskButton $kind="raised"><RarIcon /></TaskButton>
            <TaskButton $kind="flash"><ReportIcon size={18} /></TaskButton>
            <Tray>
                <ToolItem $w={25}><SpeakerIcon /></ToolItem>
                <ToolItem $w={23}><NetTrayIcon /></ToolItem>
                <FlagIcon />
                <Clock><Text>3:00 PM</Text></Clock>
                <ShowDesktopIcon />
            </Tray>
        </Taskbar>
    </Screen>
)

export default App
